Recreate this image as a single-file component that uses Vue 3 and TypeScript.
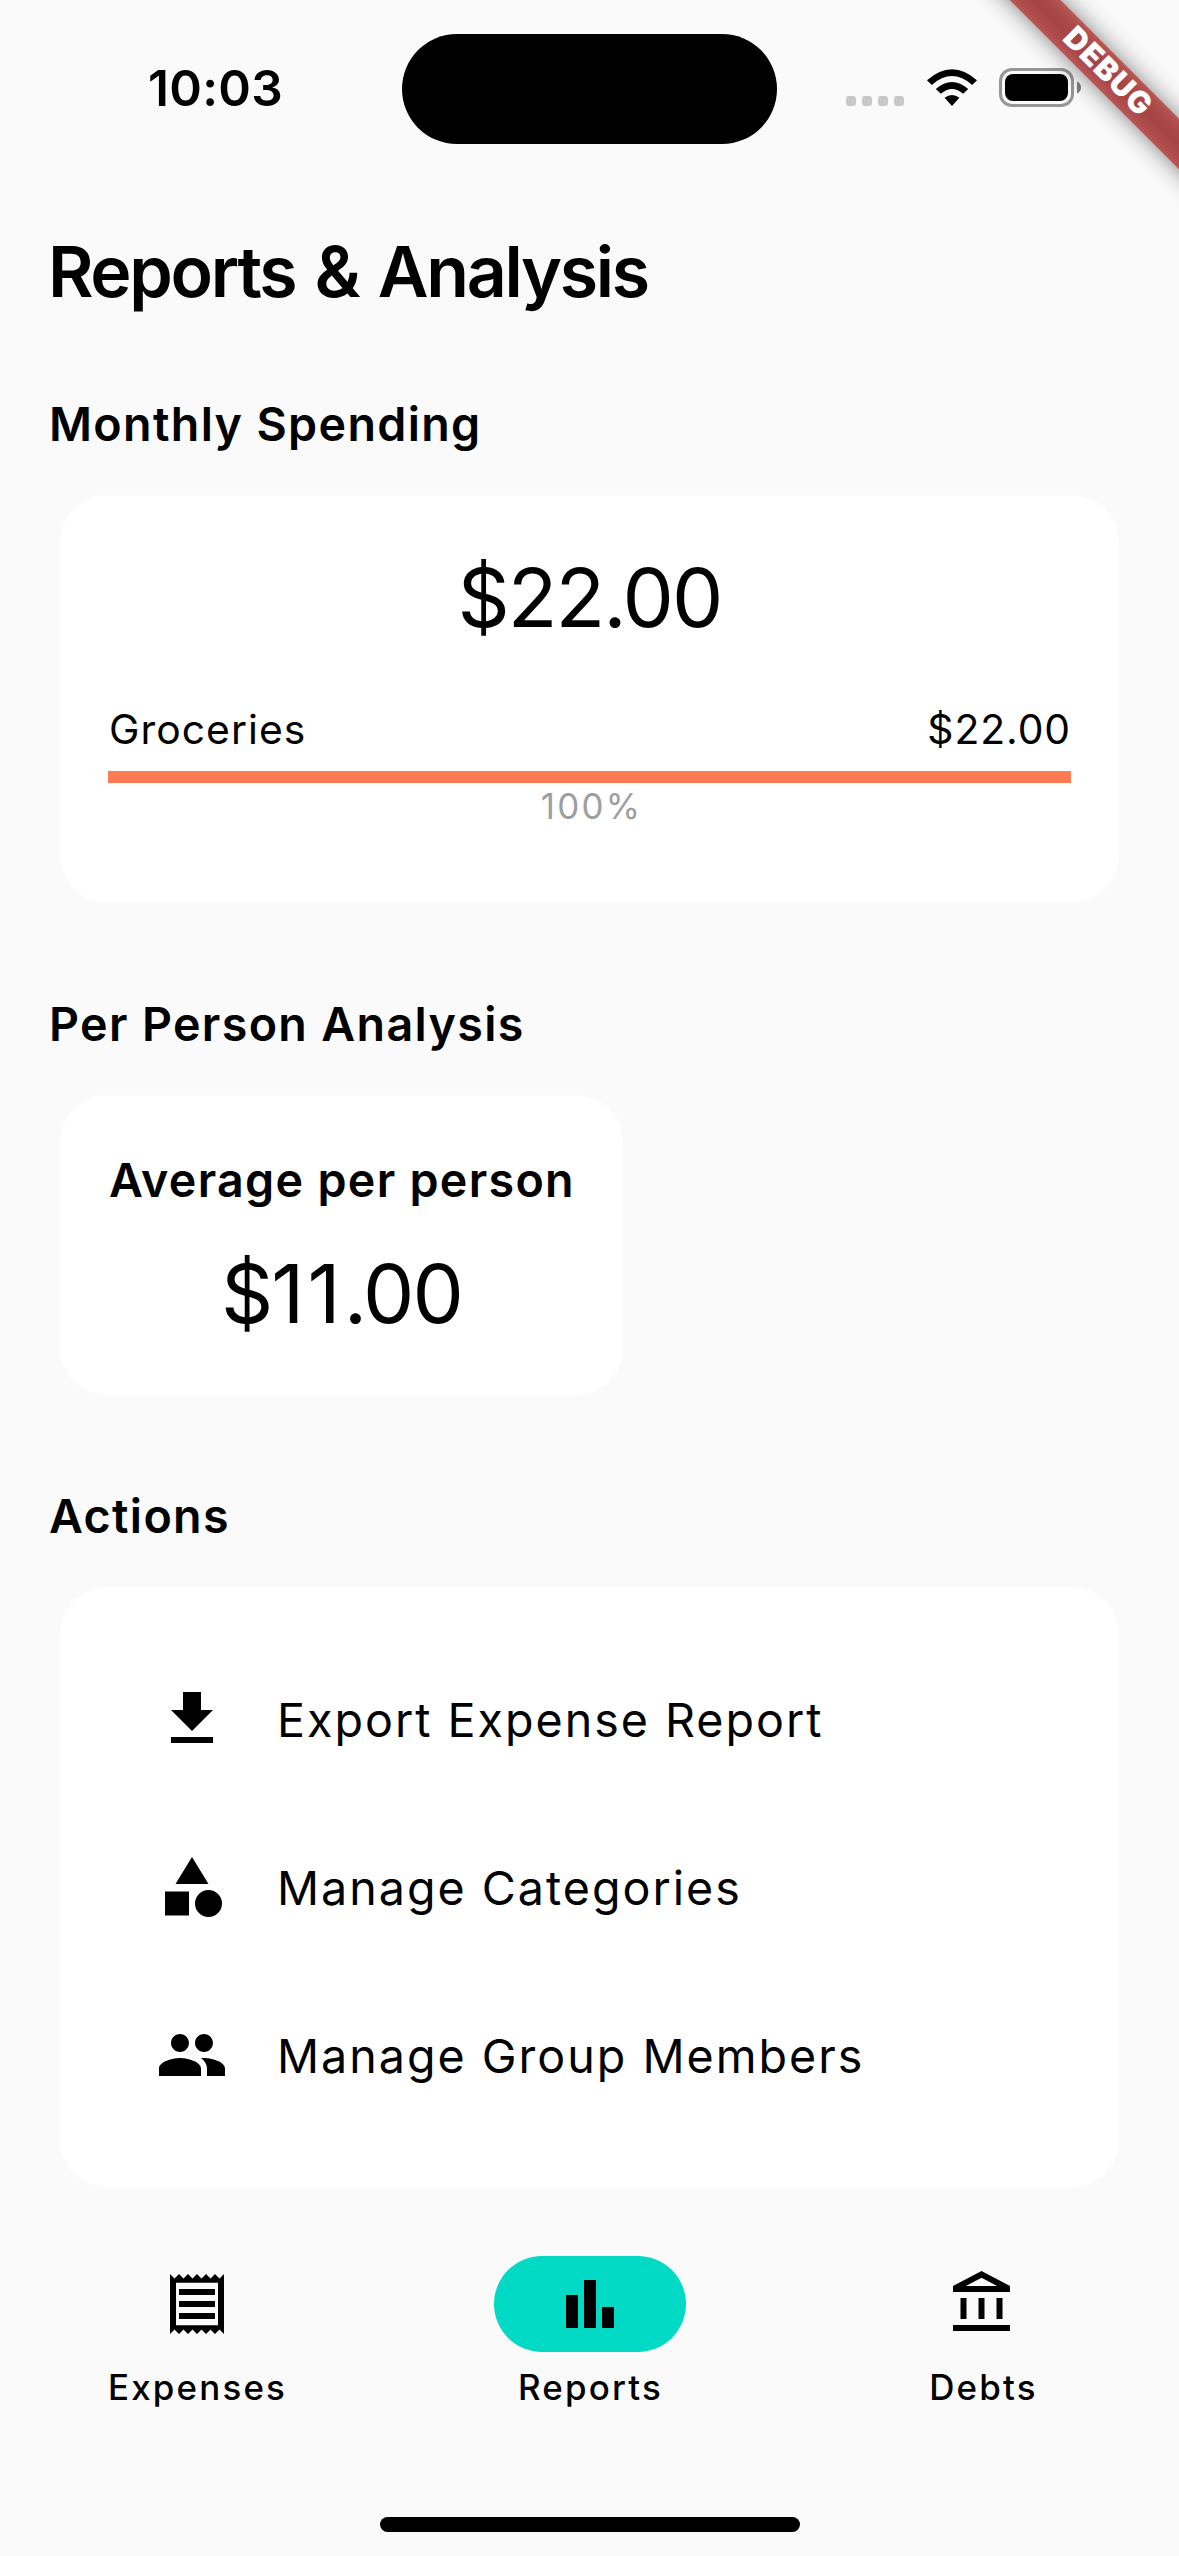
<script setup lang="ts">
interface Action {
  label: string
  icon: string
}

interface Tab {
  label: string
  icon: string
  active: boolean
}

const categories = [{ name: 'Groceries', amount: '$22.00', percent: 100 }]

const actions: Action[] = [
  { label: 'Export Expense Report', icon: 'M19 9h-4V3H9v6H5l7 7 7-7zM5 18v2h14v-2H5z' },
  {
    label: 'Manage Categories',
    icon: 'M12 2l-5.5 9h11zM13 17.5a4.5 4.5 0 1 0 9 0a4.5 4.5 0 1 0-9 0zM3 13.5h8v8H3z',
  },
  {
    label: 'Manage Group Members',
    icon: 'M16 11c1.66 0 2.99-1.34 2.99-3S17.66 5 16 5c-1.66 0-3 1.34-3 3s1.34 3 3 3zm-8 0c1.66 0 2.99-1.34 2.99-3S9.66 5 8 5C6.34 5 5 6.34 5 8s1.34 3 3 3zm0 2c-2.33 0-7 1.17-7 3.5V19h14v-2.5c0-2.33-4.67-3.5-7-3.5zm8 0c-.29 0-.62.02-.97.05 1.16.84 1.97 1.97 1.97 3.45V19h6v-2.5c0-2.33-4.67-3.5-7-3.5z',
  },
]

const tabs: Tab[] = [
  {
    label: 'Expenses',
    active: false,
    icon: 'M19.5 3.5L18 2l-1.5 1.5L15 2l-1.5 1.5L12 2l-1.5 1.5L9 2 7.5 3.5 6 2 4.5 3.5 3 2v20l1.5-1.5L6 22l1.5-1.5L9 22l1.5-1.5L12 22l1.5-1.5L15 22l1.5-1.5L18 22l1.5-1.5L21 22V2l-1.5 1.5zM19 19.09H5V4.91h14v14.18zM6 15h12v2H6zm0-4h12v2H6zm0-4h12v2H6z',
  },
  { label: 'Reports', active: true, icon: 'M4 9h4v11H4zm12 4h4v7h-4zm-6-9h4v16h-4z' },
  {
    label: 'Debts',
    active: false,
    icon: 'M6.5 10h-2v7h2v-7zm6 0h-2v7h2v-7zm8.5 9H2v2h19v-2zm-2.5-9h-2v7h2v-7zm-7-6.74L16.71 6H6.29l5.21-2.74m0-2.26L2 6v2h19V6l-9.5-5z',
  },
]
</script>

<template>
  <div class="screen">
    <svg class="debug-banner" width="240" height="240" viewBox="0 0 240 240">
      <defs>
        <filter id="banner-shadow" x="-100" y="-150" width="540" height="540" filterUnits="userSpaceOnUse">
          <feGaussianBlur stdDeviation="11.5" />
        </filter>
      </defs>
      <path d="M21.3-100L340 218.7V269.3L-29.3-100z" fill="#000" fill-opacity=".5" filter="url(#banner-shadow)" />
      <path d="M21.3-100L340 218.7V269.3L-29.3-100z" fill="#b71c1c" fill-opacity=".63" />
      <text x="0" y="0" transform="translate(169.5 71) rotate(45)" dy="11" text-anchor="middle">DEBUG</text>
    </svg>

    <header class="status-bar">
      <span class="time">10:03</span>
      <div class="island"></div>
      <div class="status-icons">
        <div class="dots"><i v-for="n in 4" :key="n"></i></div>
        <svg class="wifi" width="52" height="38" viewBox="0 0 52 38">
          <path d="M1 11.2Q26-10.8 51 11.2L46.2 16Q26-1.8 5.8 16z" />
          <path d="M9.8 20Q26 6 42.2 20L37.2 24.8Q26 15.4 14.8 24.8z" />
          <path d="M18.6 28.8Q26 23 33.4 28.8L26 37z" />
        </svg>
        <svg class="battery" width="83" height="39" viewBox="0 0 83 39">
          <rect x="1.5" y="1.5" width="72" height="36" rx="11.5" fill="none" stroke="#000" stroke-opacity=".4" stroke-width="3" />
          <rect x="6" y="6" width="63" height="27" rx="8" />
          <path d="M78 13.5q4 1.8 4 6t-4 6z" fill-opacity=".5" />
        </svg>
      </div>
    </header>

    <main>
      <h1>Reports &amp; Analysis</h1>

      <section>
        <h2>Monthly Spending</h2>
        <div class="card spending">
          <p class="amount">$22.00</p>
          <div v-for="c in categories" :key="c.name" class="category">
            <div class="category-row">
              <span class="category-name">{{ c.name }}</span>
              <span class="category-amount">{{ c.amount }}</span>
            </div>
            <div class="track"><div class="fill" :style="{ width: c.percent + '%' }"></div></div>
            <p class="percent">{{ c.percent }}%</p>
          </div>
        </div>
      </section>

      <section>
        <h2>Per Person Analysis</h2>
        <div class="card person">
          <h3>Average per person</h3>
          <p class="amount">$<span class="ones">11</span>.00</p>
        </div>
      </section>

      <section>
        <h2>Actions</h2>
        <div class="card actions">
          <div v-for="a in actions" :key="a.label" class="action">
            <svg width="72" height="72" viewBox="0 0 24 24"><path :d="a.icon" /></svg>
            <span>{{ a.label }}</span>
          </div>
        </div>
      </section>
    </main>

    <nav>
      <div v-for="t in tabs" :key="t.label" class="tab">
        <div class="pill" :class="{ active: t.active }">
          <svg width="72" height="72" viewBox="0 0 24 24"><path :d="t.icon" fill-rule="evenodd" /></svg>
        </div>
        <span>{{ t.label }}</span>
      </div>
    </nav>
    <div class="home-indicator"></div>
  </div>
</template>

<style>
body {
  background: #fafafa;
}
</style>

<style scoped>
.screen {
  position: relative;
  box-sizing: border-box;
  width: 1179px;
  height: 2556px;
  overflow: hidden;
  display: flex;
  flex-direction: column;
  background: #fafafa;
  color: #000;
  font-family: Inter, 'Liberation Sans', sans-serif;
}

h1,
h2,
h3,
p {
  margin: 0;
}

svg {
  display: block;
  flex: none;
}

/* Corner ribbon laid over the page, beneath the system status icons */
.debug-banner {
  position: absolute;
  top: 0;
  right: 0;
}

.debug-banner text {
  fill: #fff;
  font-size: 30.6px;
  font-weight: 900;
  letter-spacing: 1px;
}

.status-bar {
  position: relative;
  display: flex;
  align-items: flex-start;
  height: 177px;
  padding-left: 148px;
}

.time {
  width: 254px;
  margin-top: 58px;
  font-size: 49.5px;
  font-weight: 600;
  line-height: 60px;
  letter-spacing: 0.3px;
}

.island {
  width: 375px;
  height: 110px;
  margin-top: 34px;
  border-radius: 55px;
  background: #000;
}

.status-icons {
  display: flex;
  align-items: flex-start;
  margin: 68px 0 0 69px;
}

.dots {
  display: flex;
  gap: 6px;
  width: 80px;
  margin-top: 28px;
}

.dots i {
  width: 10px;
  height: 10px;
  border-radius: 3px;
  background: #c8c8c8;
}

.wifi {
  margin-top: 1px;
}

.battery {
  margin-left: 21px;
}

main {
  padding: 53px 60px 0 48px;
}

h1 {
  font-size: 69.8px;
  font-weight: 600;
  line-height: 84px;
  letter-spacing: -2.3px;
  word-spacing: 4px;
}

section {
  margin-top: 91px;
}

h1 + section {
  margin-top: 80px;
}

h2,
h3 {
  margin-left: 1px;
  font-size: 46.6px;
  font-weight: 600;
  line-height: 60px;
  letter-spacing: 1.35px;
}

h3 {
  letter-spacing: 1.3px;
}

.card {
  box-sizing: border-box;
  margin: 41px 0 0 12px;
  border-radius: 48px;
  background: #fff;
}

.amount {
  font-size: 81.5px;
  line-height: 96px;
  letter-spacing: -2px;
  text-align: center;
}

.ones {
  letter-spacing: 3px;
}

.spending {
  height: 408px;
  padding: 55px 48px 0;
}

.category {
  margin-top: 53px;
}

.category-row {
  display: flex;
  justify-content: space-between;
  font-size: 40.8px;
  line-height: 60px;
  letter-spacing: 1.05px;
}

.category-name {
  padding-left: 1px;
}

.category-amount {
  letter-spacing: 0.93px;
}

.track {
  height: 12px;
  margin-top: 12px;
}

.fill {
  height: 100%;
  background: #ff7b54;
}

.percent {
  padding-left: 4px;
  color: #9e9e9e;
  font-size: 34.9px;
  line-height: 46px;
  letter-spacing: 2.2px;
  text-align: center;
}

.person {
  width: 563px;
  height: 300px;
  padding: 55px 48px 0;
  white-space: nowrap;
}

.person .amount {
  margin-top: 36px;
}

.actions {
  height: 600px;
  padding: 48px 96px;
}

.action {
  display: flex;
  align-items: center;
  gap: 48px;
  height: 168px;
  font-size: 46.6px;
  letter-spacing: 2px;
}

.action span {
  padding: 2px 0 0 1px;
  line-height: 60px;
}

nav {
  display: flex;
  margin-top: 69px;
}

.tab {
  flex: 1;
  display: flex;
  flex-direction: column;
  align-items: center;
  gap: 11px;
  font-size: 34.9px;
  font-weight: 500;
  line-height: 48px;
  letter-spacing: 2.2px;
}

.tab span {
  padding-left: 2px;
}

.pill {
  display: flex;
  align-items: center;
  justify-content: center;
  width: 192px;
  height: 96px;
  border-radius: 48px;
}

.pill.active {
  background: #03dac6;
}

.home-indicator {
  width: 420px;
  height: 15px;
  margin: 106px auto 0;
  border-radius: 8px;
  background: #000;
}
</style>
